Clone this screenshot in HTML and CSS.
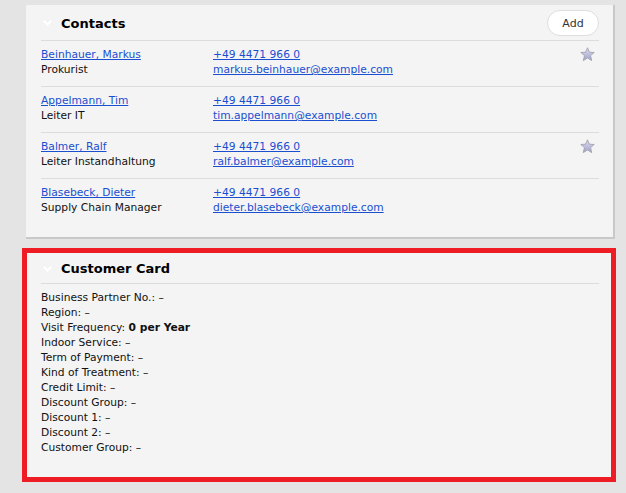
FILE: index.html
```html
<!DOCTYPE html>
<html>
<head>
<meta charset="utf-8">
<link rel="stylesheet" href="styles.css">
</head>
<body>
<div class="page">
  <section class="card contacts">
    <header class="card-head">
      <svg class="chev" width="11" height="8" viewBox="0 0 11 8"><polyline points="1.5,1.5 5.5,5.5 9.5,1.5" fill="none" stroke="#ffffff" stroke-width="3"/></svg>
      <h2 class="title">Contacts</h2>
      <button class="add">Add</button>
    </header>
    <div class="row">
      <div class="col1"><a href="#">Beinhauer, Markus</a><div>Prokurist</div></div>
      <div class="col2"><a href="#">+49 4471 966 0</a><div><a href="#">markus.beinhauer@example.com</a></div></div>
      <svg class="star" width="15" height="15" viewBox="0 0 15 15"><defs><linearGradient id="sg" x1="0" y1="0" x2="0" y2="1"><stop offset="0" stop-color="#dcdcee"/><stop offset="1" stop-color="#a2a2cc"/></linearGradient></defs><polygon points="7.5,0.8 9.4,5.2 14.2,5.5 10.5,8.6 11.7,13.6 7.5,10.9 3.3,13.6 4.5,8.6 0.8,5.5 5.6,5.2" fill="url(#sg)" stroke="#a0a0b0" stroke-width="0.9" stroke-linejoin="round"/></svg>
    </div>
    <div class="row">
      <div class="col1"><a href="#">Appelmann, Tim</a><div>Leiter IT</div></div>
      <div class="col2"><a href="#">+49 4471 966 0</a><div><a href="#">tim.appelmann@example.com</a></div></div>
    </div>
    <div class="row">
      <div class="col1"><a href="#">Balmer, Ralf</a><div>Leiter Instandhaltung</div></div>
      <div class="col2"><a href="#">+49 4471 966 0</a><div><a href="#">ralf.balmer@example.com</a></div></div>
      <svg class="star" width="15" height="15" viewBox="0 0 15 15"><polygon points="7.5,0.8 9.4,5.2 14.2,5.5 10.5,8.6 11.7,13.6 7.5,10.9 3.3,13.6 4.5,8.6 0.8,5.5 5.6,5.2" fill="url(#sg)" stroke="#a0a0b0" stroke-width="0.9" stroke-linejoin="round"/></svg>
    </div>
    <div class="row">
      <div class="col1"><a href="#">Blasebeck, Dieter</a><div>Supply Chain Manager</div></div>
      <div class="col2"><a href="#">+49 4471 966 0</a><div><a href="#">dieter.blasebeck@example.com</a></div></div>
    </div>
  </section>

  <section class="card customer">
    <header class="card-head small">
      <svg class="chev" width="11" height="8" viewBox="0 0 11 8"><polyline points="1.5,1.5 5.5,5.5 9.5,1.5" fill="none" stroke="#ffffff" stroke-width="3"/></svg>
      <h2 class="title">Customer Card</h2>
    </header>
    <div class="fields">
      <div>Business Partner No.: –</div>
      <div>Region: –</div>
      <div>Visit Frequency: <b>0 per Year</b></div>
      <div>Indoor Service: –</div>
      <div>Term of Payment: –</div>
      <div>Kind of Treatment: –</div>
      <div>Credit Limit: –</div>
      <div>Discount Group: –</div>
      <div>Discount 1: –</div>
      <div>Discount 2: –</div>
      <div>Customer Group: –</div>
    </div>
  </section>
</div>
</body>
</html>
```

FILE: styles.css
```css
html, body {
  margin: 0;
  padding: 0;
  background: #e4e4e4;
}
body {
  font-family: "DejaVu Sans", Verdana, sans-serif;
  font-size: 10.7px;
  line-height: 15px;
  color: #111;
}
.page {
  padding: 5px 0 0 26px;
  width: 589px;
}
.card {
  background: #f4f4f4;
  box-sizing: border-box;
}
.contacts {
  width: 589px;
  border-right: 2px solid #c8c8c8;
  border-bottom: 2px solid #c8c8c8;
  padding: 5px 14px 13px 15px;
}
.customer {
  margin: 9px 0 0 -4px;
  width: 594px;
  border: 5px solid #ee1c25;
  padding: 0 12px 22px 14px;
}
.card-head {
  display: flex;
  align-items: flex-start;
  height: 30px;
  border-bottom: 1px solid #dcdcdc;
  box-sizing: content-box;
}
.card-head.small {
  align-items: center;
  height: 30px;
  margin-bottom: 6px;
}
.chev {
  margin: 1px 8px 0 1px;
  filter: drop-shadow(0 0 0.6px #d8d8d8);
}
.title {
  margin: 0;
  font-size: 13px;
  font-weight: bold;
  color: #000;
  flex: 1;
}
.contacts .chev { margin-top: 9px; }
.contacts .title { margin-top: 6px; }
.add {
  width: 52px;
  height: 26px;
  border-radius: 13px;
  border: 1px solid #dedede;
  background: #fff;
  font-family: "DejaVu Sans", Verdana, sans-serif;
  font-size: 11px;
  color: #333;
  padding: 0;
}
.row {
  display: flex;
  padding: 6px 0 9px;
  border-bottom: 1px solid #dcdcdc;
  position: relative;
}
.row:last-child {
  border-bottom: none;
}
.col1 {
  width: 172px;
}
.col2 {
  flex: 1;
}
a {
  color: #1a4fd0;
  text-decoration: underline;
}
.star {
  position: absolute;
  right: 4px;
  top: 6px;
}
.fields b {
  font-weight: bold;
}
```
